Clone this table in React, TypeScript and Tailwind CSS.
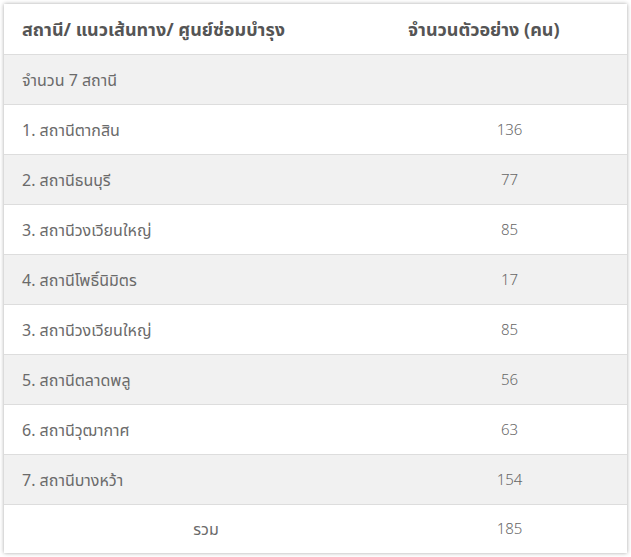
import React from "react";

const rows: [string, string][] = [
  ["1. สถานีตากสิน", "136"],
  ["2. สถานีธนบุรี", "77"],
  ["3. สถานีวงเวียนใหญ่", "85"],
  ["4. สถานีโพธิ์นิมิตร", "17"],
  ["3. สถานีวงเวียนใหญ่", "85"],
  ["5. สถานีตลาดพลู", "56"],
  ["6. สถานีวุฒากาศ", "63"],
  ["7. สถานีบางหว้า", "154"],
];

export default function App() {
  const font = { fontFamily: '"Noto Sans Thai", Tahoma, "Noto Sans", "DejaVu Sans", sans-serif' };
  return (
    <div className="w-[631px] h-[557px] bg-white pt-[4px] pl-[4px]" style={font}>
      <div className="w-[623px] bg-white shadow-[0_0_4px_rgba(0,0,0,0.35)] text-[16px] text-[#666]">
        <div className="grid grid-cols-[386px_1fr] h-[51px] items-center pt-[3px] border-b border-[#dddddd]">
          <div className="pl-[18px] font-bold text-[18px] text-[#555]">สถานี/ แนวเส้นทาง/ ศูนย์ซ่อมบำรุง</div>
          <div className="pl-[18px] font-bold text-[18px] text-[#555]">จำนวนตัวอย่าง (คน)</div>
        </div>
        <div className="grid grid-cols-[386px_1fr] h-[50px] items-center pt-[4px] border-b border-[#dddddd] bg-[#f1f1f1]">
          <div className="pl-[18px] pb-[2px] text-[#6a6a6a]">จำนวน 7 สถานี</div>
          <div />
        </div>
        {rows.map(([name, n], i) => (
          <div
            key={i}
            className={`grid grid-cols-[386px_1fr] h-[50px] items-center pt-[4px] border-b border-[#dddddd] ${i % 2 === 1 ? "bg-[#f1f1f1]" : "bg-white"}`}
          >
            <div className="pl-[18px] pb-[2px] text-[#6a6a6a]">{name}</div>
            <div className="text-center font-light text-[15px] pl-[2px]">{n}</div>
          </div>
        ))}
        <div className="grid grid-cols-[386px_1fr] h-[48px] items-center pt-[3px]">
          <div className="text-center pl-[18px] pb-[2px] text-[#6a6a6a]">รวม</div>
          <div className="text-center font-light text-[15px] pl-[2px]">185</div>
        </div>
      </div>
    </div>
  );
}
